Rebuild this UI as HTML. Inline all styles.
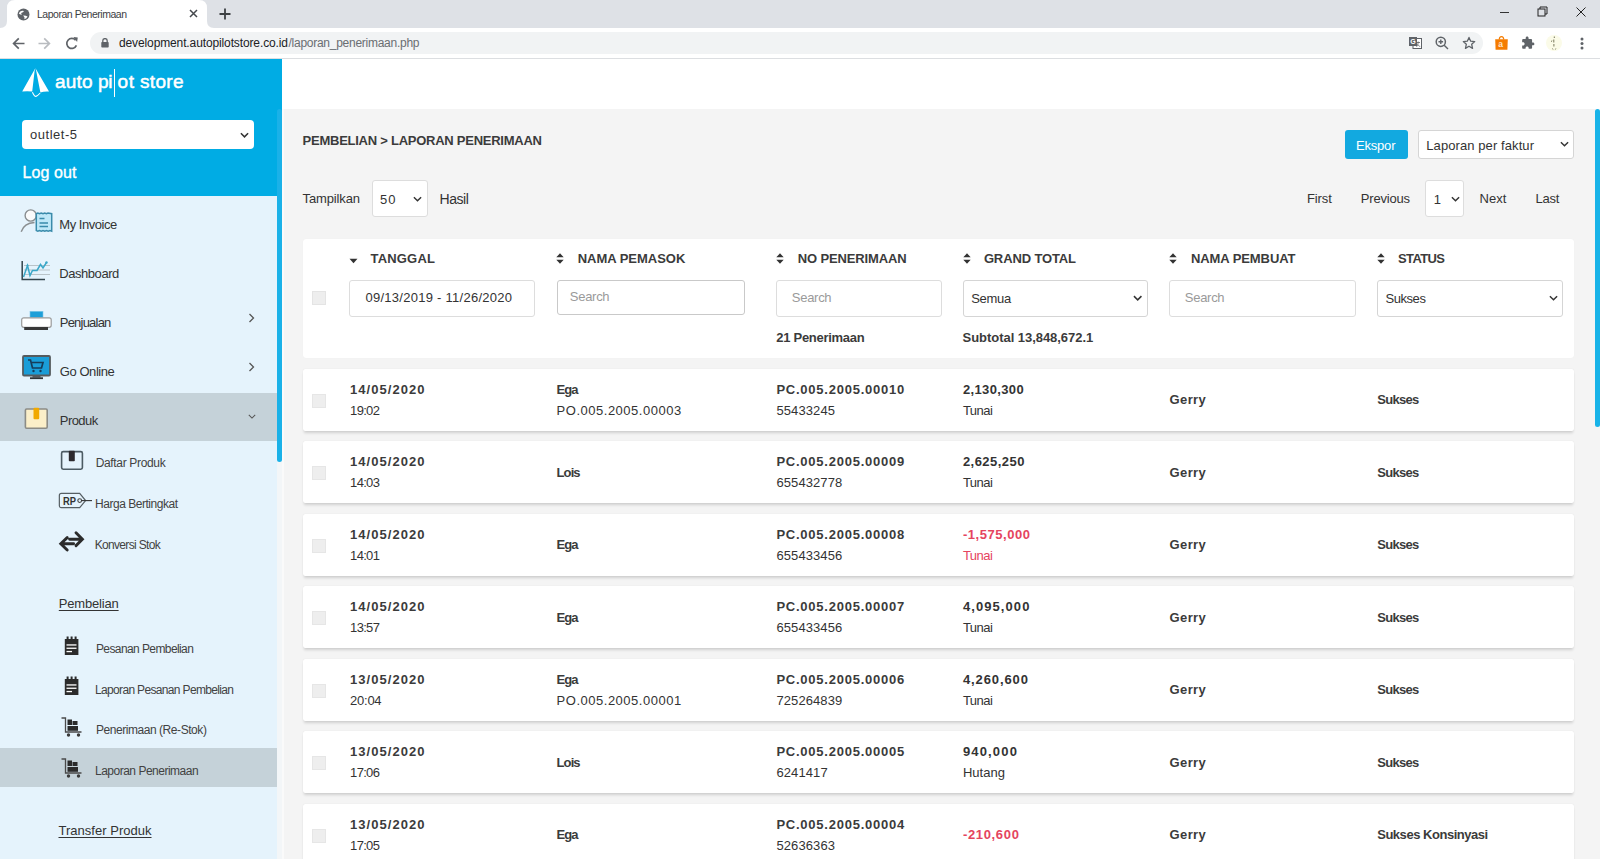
<!DOCTYPE html>
<html><head><meta charset="utf-8">
<style>
*{box-sizing:border-box;margin:0;padding:0}
html,body{width:1600px;height:859px;overflow:hidden;background:#f4f4f4;font-family:"Liberation Sans",sans-serif;color:#333;position:relative}
.a{position:absolute}
.t{position:absolute;white-space:pre;line-height:1}
.card{position:absolute;left:302.5px;width:1271.5px;background:#fff;border-radius:2px;box-shadow:0 3px 3px -1px rgba(0,0,0,.15),0 0 1px rgba(0,0,0,.12)}
</style></head><body>
<div class='a' style='left:0;top:0;width:1600px;height:28px;background:#dee1e6'></div>
<svg class='a' style='left:0;top:0' width='220' height='28'><path d='M0 28 Q7 28 7 21 L7 8 Q7 0 15 0 L199 0 Q207 0 207 8 L207 21 Q207 28 214 28 Z' fill='#fff'/></svg>
<svg class='a' style='left:17px;top:8px' width='13' height='13' viewBox='0 0 13 13'><circle cx='6.5' cy='6.5' r='6' fill='#5f6368'/><path d='M3.2 3.5 Q5 2.2 7 3 Q6.2 4.6 4.6 4.8 Q3.6 5.4 4.8 6.6 Q2.8 6.8 1.9 5.6 Q2.3 4.3 3.2 3.5Z M6.2 7.6 Q8.6 7.4 10.6 8.6 Q9.6 10.8 7.4 11.3 Q8.2 9.6 6.2 7.6Z' fill='#fff'/></svg>
<svg class='a' style='left:189px;top:9px' width='9' height='9'><path d='M1 1 L8 8 M8 1 L1 8' stroke='#45494d' stroke-width='1.5'/></svg>
<svg class='a' style='left:219px;top:8px' width='12' height='12'><path d='M6 0.5 V11.5 M0.5 6 H11.5' stroke='#3c4043' stroke-width='1.8'/></svg>
<div class='a' style='left:1500px;top:11.5px;width:9px;height:1px;background:#333'></div>
<svg class='a' style='left:1537px;top:6px' width='11' height='11'><rect x='1' y='3' width='7' height='7' fill='none' stroke='#222' stroke-width='1'/><path d='M3 3 V1 H10 V8 H8' fill='none' stroke='#222' stroke-width='1'/></svg>
<svg class='a' style='left:1576px;top:7px' width='10' height='10'><path d='M0.5 0.5 L9.5 9.5 M9.5 0.5 L0.5 9.5' stroke='#222' stroke-width='1'/></svg>
<div class='a' style='left:0;top:28px;width:1600px;height:31px;background:#fff;border-bottom:1px solid #dcdee1'></div>
<svg class='a' style='left:12px;top:37px' width='13' height='13' viewBox='0 0 13 13'><path d='M12.5 6.5 H1.8 M6.8 1.3 L1.6 6.5 L6.8 11.7' fill='none' stroke='#5f6368' stroke-width='1.7'/></svg>
<svg class='a' style='left:38px;top:37px' width='13' height='13' viewBox='0 0 13 13'><path d='M0.5 6.5 H11.2 M6.2 1.3 L11.4 6.5 L6.2 11.7' fill='none' stroke='#b9bcc0' stroke-width='1.7'/></svg>
<svg class='a' style='left:65px;top:37px' width='14' height='13' viewBox='0 0 14 13'><path d='M10.6 3.2 A5 5 0 1 0 11.4 8.4' fill='none' stroke='#5f6368' stroke-width='1.7'/><path d='M8 0.5 L12.4 0.5 L12.4 4.9 Z' fill='#5f6368' transform='rotate(8 12 3)'/></svg>
<div class='a' style='left:90px;top:32px;width:1393px;height:22px;background:#f1f3f4;border-radius:11px'></div>
<svg class='a' style='left:101px;top:38px' width='8' height='10' viewBox='0 0 8 10'><path d='M1.8 4 V2.8 A2.2 2.2 0 0 1 6.2 2.8 V4' fill='none' stroke='#5f6368' stroke-width='1.3'/><rect x='0.3' y='4' width='7.4' height='5.6' rx='0.8' fill='#5f6368'/></svg>
<svg class='a' style='left:1409px;top:37px' width='13' height='12' viewBox='0 0 13 12'><rect x='4' y='1.5' width='8.5' height='10' fill='#fff' stroke='#5f6368' stroke-width='1'/><rect x='0' y='0' width='8' height='9' fill='#5f6368'/><text x='1.3' y='7.2' font-size='7' font-family='Liberation Sans' font-weight='700' fill='#fff'>G</text><path d='M7.5 5.5 L11 5.5 M9.2 4.5 V5.5 Q9 8.5 7.5 9.8 M8.8 7.5 L11 9.8' stroke='#5f6368' stroke-width='0.8' fill='none'/></svg>
<svg class='a' style='left:1435px;top:36px' width='14' height='14' viewBox='0 0 14 14'><circle cx='5.8' cy='5.8' r='4.6' fill='none' stroke='#5f6368' stroke-width='1.5'/><path d='M9.2 9.2 L13 13 M5.8 3.5 V8.1 M3.5 5.8 H8.1' stroke='#5f6368' stroke-width='1.4'/></svg>
<svg class='a' style='left:1462px;top:36px' width='14' height='14' viewBox='0 0 24 24'><path d='M12 2.5 L14.9 8.9 L21.8 9.6 L16.6 14.3 L18.1 21.2 L12 17.6 L5.9 21.2 L7.4 14.3 L2.2 9.6 L9.1 8.9 Z' fill='none' stroke='#5f6368' stroke-width='2.2' stroke-linejoin='round'/></svg>
<svg class='a' style='left:1494px;top:35px' width='15' height='16' viewBox='0 0 15 16'><path d='M5.3 4.5 Q5.3 1.6 7.5 1.6 Q9.7 1.6 9.7 4.5' fill='none' stroke='#f57c00' stroke-width='1.2'/><path d='M1.2 4.2 H13.8 L13.4 14.8 H1.6 Z' fill='#f57c00'/><text x='4.2' y='12.3' font-size='8.5' font-family='Liberation Sans' font-weight='700' fill='#fde3c8'>a</text></svg>
<svg class='a' style='left:1521px;top:36px' width='14' height='14' viewBox='0 0 24 24'><path d='M20.5 11H19V7c0-1.1-.9-2-2-2h-4V3.5C13 2.1 11.9 1 10.5 1S8 2.1 8 3.5V5H4c-1.1 0-2 .9-2 2v3.8h1.5c1.5 0 2.7 1.2 2.7 2.7S5 16.2 3.5 16.2H2V20c0 1.1.9 2 2 2h3.8v-1.5c0-1.5 1.2-2.7 2.7-2.7s2.7 1.2 2.7 2.7V22H17c1.1 0 2-.9 2-2v-4h1.5c1.4 0 2.5-1.1 2.5-2.5S21.9 11 20.5 11z' fill='#5f6368'/></svg>
<svg class='a' style='left:1545px;top:34px' width='18' height='18' viewBox='0 0 18 18'><circle cx='9' cy='9' r='8' fill='#fbfbe8'/><path d='M9.3 2.5 V4 M8.8 5.5 V8.5 M6 7.5 L7.2 6.8 M8.9 10 V12.5 M7.5 14.5 L8 15.5 M10.8 14.5 L10.4 15.5' stroke='#77775a' stroke-width='1'/></svg>
<svg class='a' style='left:1580px;top:37px' width='4' height='13'><circle cx='2' cy='2' r='1.5' fill='#5f6368'/><circle cx='2' cy='6.5' r='1.5' fill='#5f6368'/><circle cx='2' cy='11' r='1.5' fill='#5f6368'/></svg>
<div class='a' style='left:0;top:59px;width:282px;height:137px;background:#00ace4'></div>
<svg class='a' style='left:22px;top:68px' width='28' height='30' viewBox='0 0 28 30'>
<path d='M13.3 0.3 L0.2 23.6 Q5 23 10.2 23.6 L12.6 3 Z' fill='#fff'/>
<path d='M13.5 0.3 L27 23.6 Q22 23.2 18.4 24.6 L14.2 3 Z' fill='#fff'/>
<path d='M10.4 24.2 Q12.5 28.5 13.9 28.4 Q15.5 28 18.2 25' fill='none' stroke='#fff' stroke-width='1.1'/></svg>
<div class='a' style='left:113.8px;top:69px;width:1.7px;height:28px;background:#fff'></div>
<div class='a' style='left:22px;top:120px;width:232px;height:29px;background:#fff;border-radius:4px'></div>
<svg class='a' style='left:239.5px;top:131.5px' width='9' height='6' viewBox='0 0 10 6'><path d='M1 1 L5 5 L9 1' fill='none' stroke='#333' stroke-width='1.7'/></svg>
<div class='a' style='left:0;top:196px;width:277px;height:663px;background:#e5f3fc'></div>
<div class='a' style='left:277px;top:196px;width:5px;height:663px;background:#f3f6f8'></div>
<div class='a' style='left:277px;top:109px;width:5px;height:353px;background:#1ab1e8;border-radius:3px'></div><div class='a' style='left:282px;top:109px;width:2px;height:750px;background:#fafafa'></div>
<div class='a' style='left:0;top:393px;width:277px;height:48px;background:#c5d2d9'></div>
<div class='a' style='left:0;top:748px;width:277px;height:39px;background:#c5d2d9'></div>
<svg class='a' style='left:20px;top:208px' width='33' height='25' viewBox='0 0 33 25'>
<path d='M1.2 23.8 Q4 15 14.5 14.5' fill='none' stroke='#8a8e90' stroke-width='1.4'/>
<circle cx='10.7' cy='7.5' r='5.6' fill='#fafafa' stroke='#8a8e90' stroke-width='1.4'/>
<path d='M16.3 5.7 L17.8 5 L19.5 5.7 L21.2 5 L23 5.7 L24.7 5 L26.4 5.7 L28 5 L31.7 5.7 L31.7 23.2 L30 22.6 L28.2 23.2 L26.5 22.6 L24.8 23.2 L23 22.6 L21.3 23.2 L19.5 22.6 L17.8 23.2 L16.3 22.6 Z' fill='#bfe8f8' stroke='#3a8bab' stroke-width='1.5'/>
<path d='M19.5 10.5 H24.5 M19.5 15 H28 M19.5 18.5 H28' stroke='#3a8bab' stroke-width='1.6'/></svg>
<svg class='a' style='left:20px;top:260px' width='32' height='22' viewBox='0 0 32 22'>
<path d='M4 5.5 H30 M4 10 H30 M4 14.5 H30' stroke='#b9c3c8' stroke-width='1'/>
<path d='M2.2 1 V19.5 H25' fill='none' stroke='#34444c' stroke-width='1.5'/>
<path d='M3.5 17 L7.5 5.5 L10 15.5 L12.5 10.5 L17 10.5 L20.5 4.5 L23 8 L26.5 2.5' fill='none' stroke='#3aa7c8' stroke-width='1.5'/>
<circle cx='7.5' cy='5.5' r='1.1' fill='#3aa7c8'/><circle cx='26.5' cy='2.5' r='1.2' fill='#3aa7c8'/></svg>
<svg class='a' style='left:21px;top:310px' width='31' height='21' viewBox='0 0 31 21'>
<rect x='9' y='1.3' width='13' height='6.5' fill='#1e9fd8' stroke='#7fc6e6' stroke-width='0.6'/>
<rect x='0.7' y='7.8' width='29.5' height='9.5' rx='2' fill='#fff' stroke='#9a9a9a' stroke-width='1.2'/>
<rect x='3.2' y='17' width='23.8' height='3' fill='#383838'/></svg>
<svg class='a' style='left:248px;top:313px' width='7' height='10' viewBox='0 0 7 10'><path d='M1.5 1 L5.5 5 L1.5 9' fill='none' stroke='#555' stroke-width='1.3'/></svg>
<svg class='a' style='left:22px;top:355px' width='29' height='25' viewBox='0 0 29 25'>
<rect x='1' y='1' width='27' height='19.5' rx='1' fill='#1a9dd8' stroke='#555b5e' stroke-width='1.8'/>
<path d='M6 5 H8.5 L10.5 13 H19.5 L21 7.5 H9.5' fill='none' stroke='#163c5a' stroke-width='1.7'/>
<circle cx='11.5' cy='16' r='1.2' fill='#163c5a'/><circle cx='18.5' cy='16' r='1.2' fill='#163c5a'/>
<rect x='10.5' y='20.5' width='8' height='2' fill='#555b5e'/><rect x='8' y='22.3' width='13' height='1.8' fill='#2e3336'/></svg>
<svg class='a' style='left:248px;top:362px' width='7' height='10' viewBox='0 0 7 10'><path d='M1.5 1 L5.5 5 L1.5 9' fill='none' stroke='#555' stroke-width='1.3'/></svg>
<svg class='a' style='left:24px;top:407px' width='25' height='23' viewBox='0 0 25 23'>
<rect x='1.4' y='2' width='21.8' height='19.2' rx='1.2' fill='#fbefc9' stroke='#8c8c86' stroke-width='1.6'/>
<rect x='9.5' y='0.8' width='5.7' height='11.4' rx='1' fill='#f1a900'/></svg>
<svg class='a' style='left:247.5px;top:413.5px' width='8' height='5' viewBox='0 0 10 6'><path d='M1 1 L5 5 L9 1' fill='none' stroke='#555' stroke-width='1.3'/></svg>
<svg class='a' style='left:60px;top:450px' width='24' height='21' viewBox='0 0 24 21'>
<rect x='1.6' y='1.6' width='20.8' height='17.6' rx='1.6' fill='none' stroke='#4c5b63' stroke-width='1.6'/>
<rect x='8.8' y='0.8' width='6' height='10.4' rx='0.8' fill='#2d2a2e'/></svg>
<svg class='a' style='left:58px;top:492px' width='35' height='17' viewBox='0 0 35 17'>
<path d='M3.4 1.4 H21.7 L27.6 8.6 L21.7 15.6 H3.4 Q1.35 15.6 1.35 13.6 V3.4 Q1.35 1.4 3.4 1.4 Z' fill='none' stroke='#555e63' stroke-width='1.2'/>
<text x='4.9' y='12.5' font-size='10.6' font-family='Liberation Sans' font-weight='700' fill='#333' textLength='13' lengthAdjust='spacingAndGlyphs'>RP</text>
<circle cx='21.7' cy='8.6' r='1.9' fill='none' stroke='#444' stroke-width='1.1'/><path d='M23.5 8.6 H34' stroke='#333' stroke-width='1.1'/></svg>
<svg class='a' style='left:58px;top:530px' width='28' height='23' viewBox='0 0 28 23'>
<path d='M9.2 7.6 L2.8 13.8 L9.2 20 M3.5 13.8 H15.6 M18 2.7 L24.4 9.2 L18 15.6 M11.6 9.2 H23.6' fill='none' stroke='#2b2b2b' stroke-width='2.9' stroke-linecap='round' stroke-linejoin='miter'/></svg>
<svg class='a' style='left:64px;top:636px' width='15' height='20' viewBox='0 0 15 20'>
<rect x='0.8' y='3' width='13.6' height='16' fill='#2b2b2b'/>
<rect x='2.6' y='0.5' width='2' height='4' fill='#2b2b2b'/><rect x='6.6' y='0.5' width='2' height='4' fill='#2b2b2b'/><rect x='10.6' y='0.5' width='2' height='4' fill='#2b2b2b'/>
<rect x='2.5' y='8.3' width='10' height='1.3' fill='#fff'/><rect x='2.5' y='11.6' width='10' height='1.3' fill='#fff'/><rect x='2.5' y='14.9' width='5.5' height='1.3' fill='#fff'/></svg>
<svg class='a' style='left:64px;top:676px' width='15' height='20' viewBox='0 0 15 20'>
<rect x='0.8' y='3' width='13.6' height='16' fill='#2b2b2b'/>
<rect x='2.6' y='0.5' width='2' height='4' fill='#2b2b2b'/><rect x='6.6' y='0.5' width='2' height='4' fill='#2b2b2b'/><rect x='10.6' y='0.5' width='2' height='4' fill='#2b2b2b'/>
<rect x='2.5' y='8.3' width='10' height='1.3' fill='#fff'/><rect x='2.5' y='11.6' width='10' height='1.3' fill='#fff'/><rect x='2.5' y='14.9' width='5.5' height='1.3' fill='#fff'/></svg>
<svg class='a' style='left:61px;top:717px' width='22' height='21' viewBox='0 0 22 21'>
<path d='M0.5 1 H4.5 V15 H20.5' fill='none' stroke='#4a4a4a' stroke-width='1.3'/>
<rect x='6.5' y='2.5' width='4.5' height='5.5' fill='#2b2b2b'/><rect x='11.5' y='4' width='5' height='4' fill='#2b2b2b'/>
<rect x='6.5' y='9' width='10.5' height='4.8' fill='#2b2b2b'/>
<circle cx='7.5' cy='18' r='1.7' fill='#3a3a3a'/><circle cx='17.5' cy='18' r='1.7' fill='#3a3a3a'/></svg>
<svg class='a' style='left:61px;top:758px' width='22' height='21' viewBox='0 0 22 21'>
<path d='M0.5 1 H4.5 V15 H20.5' fill='none' stroke='#4a4a4a' stroke-width='1.3'/>
<rect x='6.5' y='2.5' width='4.5' height='5.5' fill='#2b2b2b'/><rect x='11.5' y='4' width='5' height='4' fill='#2b2b2b'/>
<rect x='6.5' y='9' width='10.5' height='4.8' fill='#2b2b2b'/>
<circle cx='7.5' cy='18' r='1.7' fill='#3a3a3a'/><circle cx='17.5' cy='18' r='1.7' fill='#3a3a3a'/></svg>
<div class='a' style='left:282px;top:59px;width:1318px;height:50px;background:#fff'></div>
<div class='a' style='left:1595px;top:109px;width:5px;height:318px;background:#18b3e8;border-radius:3px'></div>
<div class='a' style='left:1345px;top:130px;width:62.5px;height:29px;background:#12a9e0;border-radius:3px'></div>
<div class='a' style='left:1418px;top:130px;width:156px;height:29px;background:#fff;border:1px solid #d5d5d5;border-radius:3px'></div>
<svg class='a' style='left:1560px;top:141px' width='9' height='6' viewBox='0 0 10 6'><path d='M1 1 L5 5 L9 1' fill='none' stroke='#333' stroke-width='1.6'/></svg>
<div class='a' style='left:372px;top:180px;width:55.5px;height:37px;background:#fff;border:1px solid #ddd;border-radius:3px'></div>
<svg class='a' style='left:412.5px;top:195.5px' width='9' height='6' viewBox='0 0 10 6'><path d='M1 1 L5 5 L9 1' fill='none' stroke='#333' stroke-width='1.6'/></svg>
<div class='a' style='left:1425px;top:180px;width:39px;height:37px;background:#fff;border:1px solid #ddd;border-radius:3px'></div>
<svg class='a' style='left:1450.5px;top:195.5px' width='9' height='6' viewBox='0 0 10 6'><path d='M1 1 L5 5 L9 1' fill='none' stroke='#333' stroke-width='1.6'/></svg>
<div class='a' style='left:302.5px;top:239px;width:1271.5px;height:119px;background:#fff;border-radius:3px;box-shadow:0 0 1px rgba(0,0,0,.06)'></div>
<div class='a' style='left:312px;top:291px;width:14px;height:14px;background:#eee;border:1px solid #e4e4e4'></div>
<svg class='a' style='left:349px;top:258px' width='9' height='6' viewBox='0 0 9 6'><path d='M0.5 0.8 H8.5 L4.5 5.2 Z' fill='#333'/></svg>
<svg class='a' style='left:556px;top:253px' width='8' height='11' viewBox='0 0 8 11'><path d='M4 0.3 L7.7 4.3 H0.3 Z M0.3 6.7 H7.7 L4 10.7 Z' fill='#333'/></svg>
<svg class='a' style='left:776px;top:253px' width='8' height='11' viewBox='0 0 8 11'><path d='M4 0.3 L7.7 4.3 H0.3 Z M0.3 6.7 H7.7 L4 10.7 Z' fill='#333'/></svg>
<svg class='a' style='left:962.6px;top:253px' width='8' height='11' viewBox='0 0 8 11'><path d='M4 0.3 L7.7 4.3 H0.3 Z M0.3 6.7 H7.7 L4 10.7 Z' fill='#333'/></svg>
<svg class='a' style='left:1169.4px;top:253px' width='8' height='11' viewBox='0 0 8 11'><path d='M4 0.3 L7.7 4.3 H0.3 Z M0.3 6.7 H7.7 L4 10.7 Z' fill='#333'/></svg>
<svg class='a' style='left:1376.7px;top:253px' width='8' height='11' viewBox='0 0 8 11'><path d='M4 0.3 L7.7 4.3 H0.3 Z M0.3 6.7 H7.7 L4 10.7 Z' fill='#333'/></svg>
<div class='a' style='left:349.4px;top:279.5px;width:185.20000000000005px;height:37px;background:#fff;border:1px solid #ddd;border-radius:3px'></div>
<div class='a' style='left:556.7px;top:279.5px;width:188.0px;height:35px;background:#fff;border:1px solid #c9c9c9;border-radius:3px'></div>
<div class='a' style='left:776.3px;top:279.5px;width:165.4000000000001px;height:37px;background:#fff;border:1px solid #ddd;border-radius:3px'></div>
<div class='a' style='left:962.6px;top:279.5px;width:184.9999999999999px;height:37px;background:#fff;border:1px solid #d5d5d5;border-radius:3px'></div>
<svg class='a' style='left:1133.4px;top:295px' width='9.4' height='6' viewBox='0 0 10 6'><path d='M1 1 L5 5 L9 1' fill='none' stroke='#333' stroke-width='1.6'/></svg>
<div class='a' style='left:1169.4px;top:279.5px;width:186.19999999999982px;height:37px;background:#fff;border:1px solid #ddd;border-radius:3px'></div>
<div class='a' style='left:1376.7px;top:279.5px;width:186.29999999999995px;height:37px;background:#fff;border:1px solid #d5d5d5;border-radius:3px'></div>
<svg class='a' style='left:1549.3px;top:295px' width='9' height='6' viewBox='0 0 10 6'><path d='M1 1 L5 5 L9 1' fill='none' stroke='#333' stroke-width='1.6'/></svg>
<div class='card' style='top:369px;height:62px'></div>
<div class='a' style='left:312px;top:394px;width:14px;height:14px;background:#eee;border:1px solid #e6e6e6'></div>
<div class='card' style='top:441px;height:62px'></div>
<div class='a' style='left:312px;top:466px;width:14px;height:14px;background:#eee;border:1px solid #e6e6e6'></div>
<div class='card' style='top:514px;height:62px'></div>
<div class='a' style='left:312px;top:539px;width:14px;height:14px;background:#eee;border:1px solid #e6e6e6'></div>
<div class='card' style='top:586px;height:62px'></div>
<div class='a' style='left:312px;top:611px;width:14px;height:14px;background:#eee;border:1px solid #e6e6e6'></div>
<div class='card' style='top:659px;height:62px'></div>
<div class='a' style='left:312px;top:684px;width:14px;height:14px;background:#eee;border:1px solid #e6e6e6'></div>
<div class='card' style='top:731px;height:62px'></div>
<div class='a' style='left:312px;top:756px;width:14px;height:14px;background:#eee;border:1px solid #e6e6e6'></div>
<div class='card' style='top:804px;height:62px'></div>
<div class='a' style='left:312px;top:829px;width:14px;height:14px;background:#eee;border:1px solid #e6e6e6'></div>
<div class='t' style='left:37px;top:9.11px;font-size:10.5px;font-weight:400;color:#3c4043;letter-spacing:-0.475px;'>Laporan Penerimaan</div>
<div class='t' style='left:119px;top:37.44px;font-size:12px;font-weight:400;color:#202124;letter-spacing:-0.122px;'>development.autopilotstore.co.id</div>
<div class='t' style='left:288.5px;top:37.44px;font-size:12px;font-weight:400;color:#6a6e72;letter-spacing:-0.263px;'>/laporan_penerimaan.php</div>
<div class='t' style='left:55px;top:71.51px;font-size:19px;font-weight:400;color:#fff;letter-spacing:0.205px;-webkit-text-stroke:0.5px #fff;'>auto</div>
<div class='t' style='left:98px;top:71.51px;font-size:19px;font-weight:400;color:#fff;-webkit-text-stroke:0.5px #fff;'>p</div>
<div class='t' style='left:108.3px;top:71.51px;font-size:19px;font-weight:400;color:#fff;-webkit-text-stroke:0.5px #fff;'>i</div>
<div class='t' style='left:117.6px;top:71.51px;font-size:19px;font-weight:400;color:#fff;letter-spacing:0.541px;-webkit-text-stroke:0.5px #fff;'>ot</div>
<div class='t' style='left:140px;top:71.51px;font-size:19px;font-weight:400;color:#fff;letter-spacing:0.312px;-webkit-text-stroke:0.5px #fff;'>store</div>
<div class='t' style='left:30px;top:128.39px;font-size:13px;font-weight:400;color:#333;letter-spacing:0.518px;'>outlet-5</div>
<div class='t' style='left:22.5px;top:165.25px;font-size:16px;font-weight:400;color:#fff;letter-spacing:0.102px;-webkit-text-stroke:0.35px #fff;'>Log out</div>
<div class='t' style='left:59.3px;top:217.79px;font-size:13px;font-weight:400;color:#333;letter-spacing:-0.460px;'>My Invoice</div>
<div class='t' style='left:59.3px;top:266.59px;font-size:13px;font-weight:400;color:#333;letter-spacing:-0.451px;'>Dashboard</div>
<div class='t' style='left:59.8px;top:315.79px;font-size:13px;font-weight:400;color:#333;letter-spacing:-0.791px;'>Penjualan</div>
<div class='t' style='left:59.8px;top:364.69px;font-size:13px;font-weight:400;color:#333;letter-spacing:-0.443px;'>Go Online</div>
<div class='t' style='left:59.8px;top:413.99px;font-size:13px;font-weight:400;color:#333;letter-spacing:-0.561px;'>Produk</div>
<div class='t' style='left:95.7px;top:457.44px;font-size:12px;font-weight:400;color:#424242;letter-spacing:-0.337px;'>Daftar Produk</div>
<div class='t' style='left:95px;top:497.74px;font-size:12px;font-weight:400;color:#424242;letter-spacing:-0.470px;'>Harga Bertingkat</div>
<div class='t' style='left:94.7px;top:539.04px;font-size:12px;font-weight:400;color:#424242;letter-spacing:-0.671px;'>Konversi Stok</div>
<div class='t' style='left:58.8px;top:597.09px;font-size:13px;font-weight:400;color:#333;letter-spacing:-0.180px;text-decoration:underline;text-underline-offset:2px;'>Pembelian</div>
<div class='t' style='left:95.9px;top:642.84px;font-size:12px;font-weight:400;color:#424242;letter-spacing:-0.589px;'>Pesanan Pembelian</div>
<div class='t' style='left:95px;top:683.54px;font-size:12px;font-weight:400;color:#424242;letter-spacing:-0.658px;'>Laporan Pesanan Pembelian</div>
<div class='t' style='left:95.9px;top:724.34px;font-size:12px;font-weight:400;color:#424242;letter-spacing:-0.442px;'>Penerimaan (Re-Stok)</div>
<div class='t' style='left:95px;top:764.74px;font-size:12px;font-weight:400;color:#424242;letter-spacing:-0.499px;'>Laporan Penerimaan</div>
<div class='t' style='left:58.5px;top:824.39px;font-size:13px;font-weight:400;color:#333;letter-spacing:0.019px;text-decoration:underline;text-underline-offset:2px;'>Transfer Produk</div>
<div class='t' style='left:302.6px;top:133.79px;font-size:13px;font-weight:700;color:#3b3b3b;letter-spacing:-0.251px;'>PEMBELIAN &gt; LAPORAN PENERIMAAN</div>
<div class='t' style='left:1356px;top:138.99px;font-size:13px;font-weight:400;color:#fff;letter-spacing:-0.194px;'>Ekspor</div>
<div class='t' style='left:1426.3px;top:138.99px;font-size:13px;font-weight:400;color:#333;letter-spacing:0.086px;'>Laporan per faktur</div>
<div class='t' style='left:302.6px;top:192.29px;font-size:13px;font-weight:400;color:#333;letter-spacing:-0.141px;'>Tampilkan</div>
<div class='t' style='left:380px;top:192.99px;font-size:13px;font-weight:400;color:#333;letter-spacing:1.031px;'>50</div>
<div class='t' style='left:439.6px;top:191.55px;font-size:14px;font-weight:400;color:#333;letter-spacing:-0.456px;'>Hasil</div>
<div class='t' style='left:1307px;top:191.99px;font-size:13px;font-weight:400;color:#333;letter-spacing:-0.120px;'>First</div>
<div class='t' style='left:1360.8px;top:191.99px;font-size:13px;font-weight:400;color:#333;letter-spacing:-0.197px;'>Previous</div>
<div class='t' style='left:1433.8px;top:192.99px;font-size:13px;font-weight:400;color:#333;'>1</div>
<div class='t' style='left:1479.5px;top:191.99px;font-size:13px;font-weight:400;color:#333;letter-spacing:0.022px;'>Next</div>
<div class='t' style='left:1535.5px;top:191.99px;font-size:13px;font-weight:400;color:#333;letter-spacing:-0.259px;'>Last</div>
<div class='t' style='left:370.5px;top:252.29px;font-size:13px;font-weight:700;color:#3b3b3b;letter-spacing:0.181px;'>TANGGAL</div>
<div class='t' style='left:577.7px;top:252.29px;font-size:13px;font-weight:700;color:#3b3b3b;letter-spacing:-0.024px;'>NAMA PEMASOK</div>
<div class='t' style='left:797.7px;top:252.29px;font-size:13px;font-weight:700;color:#3b3b3b;letter-spacing:-0.126px;'>NO PENERIMAAN</div>
<div class='t' style='left:983.9px;top:252.29px;font-size:13px;font-weight:700;color:#3b3b3b;letter-spacing:-0.131px;'>GRAND TOTAL</div>
<div class='t' style='left:1191px;top:252.29px;font-size:13px;font-weight:700;color:#3b3b3b;letter-spacing:-0.085px;'>NAMA PEMBUAT</div>
<div class='t' style='left:1398px;top:252.29px;font-size:13px;font-weight:700;color:#3b3b3b;letter-spacing:-0.616px;'>STATUS</div>
<div class='t' style='left:365.4px;top:291.49px;font-size:13px;font-weight:400;color:#333;letter-spacing:0.267px;'>09/13/2019 - 11/26/2020</div>
<div class='t' style='left:569.8px;top:290.39px;font-size:13px;font-weight:400;color:#9a9a9a;letter-spacing:-0.281px;'>Search</div>
<div class='t' style='left:791.8px;top:291.49px;font-size:13px;font-weight:400;color:#9a9a9a;letter-spacing:-0.281px;'>Search</div>
<div class='t' style='left:971.2px;top:292.49px;font-size:13px;font-weight:400;color:#333;letter-spacing:-0.301px;'>Semua</div>
<div class='t' style='left:1184.8px;top:291.49px;font-size:13px;font-weight:400;color:#9a9a9a;letter-spacing:-0.281px;'>Search</div>
<div class='t' style='left:1385.4px;top:292.49px;font-size:13px;font-weight:400;color:#333;letter-spacing:-0.428px;'>Sukses</div>
<div class='t' style='left:776.3px;top:331.39px;font-size:13px;font-weight:700;color:#3b3b3b;letter-spacing:-0.282px;'>21 Penerimaan</div>
<div class='t' style='left:962.6px;top:331.39px;font-size:13px;font-weight:700;color:#3b3b3b;letter-spacing:-0.046px;'>Subtotal 13,848,672.1</div>
<div class='t' style='left:350.1px;top:382.99px;font-size:13px;font-weight:700;color:#3b3b3b;letter-spacing:1.025px;'>14/05/2020</div>
<div class='t' style='left:350.1px;top:403.99px;font-size:13px;font-weight:400;color:#333;letter-spacing:-0.687px;'>19:02</div>
<div class='t' style='left:556.6px;top:382.99px;font-size:13px;font-weight:700;color:#3b3b3b;letter-spacing:-0.922px;'>Ega</div>
<div class='t' style='left:556.6px;top:403.99px;font-size:13px;font-weight:400;color:#333;letter-spacing:0.513px;'>PO.005.2005.00003</div>
<div class='t' style='left:776.4px;top:382.99px;font-size:13px;font-weight:700;color:#3b3b3b;letter-spacing:0.759px;'>PC.005.2005.00010</div>
<div class='t' style='left:776.4px;top:403.99px;font-size:13px;font-weight:400;color:#333;letter-spacing:0.102px;'>55433245</div>
<div class='t' style='left:962.9px;top:382.99px;font-size:13px;font-weight:700;color:#333;letter-spacing:0.370px;'>2,130,300</div>
<div class='t' style='left:962.9px;top:403.99px;font-size:13px;font-weight:400;color:#333;letter-spacing:-0.512px;'>Tunai</div>
<div class='t' style='left:1169.6px;top:393.39px;font-size:13px;font-weight:700;color:#3b3b3b;letter-spacing:0.349px;'>Gerry</div>
<div class='t' style='left:1377.2px;top:393.39px;font-size:13px;font-weight:700;color:#3b3b3b;letter-spacing:-0.709px;'>Sukses</div>
<div class='t' style='left:350.1px;top:455.49px;font-size:13px;font-weight:700;color:#3b3b3b;letter-spacing:1.025px;'>14/05/2020</div>
<div class='t' style='left:350.1px;top:476.49px;font-size:13px;font-weight:400;color:#333;letter-spacing:-0.687px;'>14:03</div>
<div class='t' style='left:556.6px;top:465.89px;font-size:13px;font-weight:700;color:#3b3b3b;letter-spacing:-0.911px;'>Lois</div>
<div class='t' style='left:776.4px;top:455.49px;font-size:13px;font-weight:700;color:#3b3b3b;letter-spacing:0.759px;'>PC.005.2005.00009</div>
<div class='t' style='left:776.4px;top:476.49px;font-size:13px;font-weight:400;color:#333;letter-spacing:0.100px;'>655432778</div>
<div class='t' style='left:962.9px;top:455.49px;font-size:13px;font-weight:700;color:#333;letter-spacing:0.457px;'>2,625,250</div>
<div class='t' style='left:962.9px;top:476.49px;font-size:13px;font-weight:400;color:#333;letter-spacing:-0.512px;'>Tunai</div>
<div class='t' style='left:1169.6px;top:465.89px;font-size:13px;font-weight:700;color:#3b3b3b;letter-spacing:0.349px;'>Gerry</div>
<div class='t' style='left:1377.2px;top:465.89px;font-size:13px;font-weight:700;color:#3b3b3b;letter-spacing:-0.709px;'>Sukses</div>
<div class='t' style='left:350.1px;top:527.99px;font-size:13px;font-weight:700;color:#3b3b3b;letter-spacing:1.025px;'>14/05/2020</div>
<div class='t' style='left:350.1px;top:548.99px;font-size:13px;font-weight:400;color:#333;letter-spacing:-0.687px;'>14:01</div>
<div class='t' style='left:556.6px;top:538.39px;font-size:13px;font-weight:700;color:#3b3b3b;letter-spacing:-0.922px;'>Ega</div>
<div class='t' style='left:776.4px;top:527.99px;font-size:13px;font-weight:700;color:#3b3b3b;letter-spacing:0.759px;'>PC.005.2005.00008</div>
<div class='t' style='left:776.4px;top:548.99px;font-size:13px;font-weight:400;color:#333;letter-spacing:0.100px;'>655433456</div>
<div class='t' style='left:962.9px;top:527.99px;font-size:13px;font-weight:700;color:#e5445e;letter-spacing:0.559px;'>-1,575,000</div>
<div class='t' style='left:962.9px;top:548.99px;font-size:13px;font-weight:400;color:#e5445e;letter-spacing:-0.512px;'>Tunai</div>
<div class='t' style='left:1169.6px;top:538.39px;font-size:13px;font-weight:700;color:#3b3b3b;letter-spacing:0.349px;'>Gerry</div>
<div class='t' style='left:1377.2px;top:538.39px;font-size:13px;font-weight:700;color:#3b3b3b;letter-spacing:-0.709px;'>Sukses</div>
<div class='t' style='left:350.1px;top:600.49px;font-size:13px;font-weight:700;color:#3b3b3b;letter-spacing:1.025px;'>14/05/2020</div>
<div class='t' style='left:350.1px;top:621.49px;font-size:13px;font-weight:400;color:#333;letter-spacing:-0.687px;'>13:57</div>
<div class='t' style='left:556.6px;top:610.89px;font-size:13px;font-weight:700;color:#3b3b3b;letter-spacing:-0.922px;'>Ega</div>
<div class='t' style='left:776.4px;top:600.49px;font-size:13px;font-weight:700;color:#3b3b3b;letter-spacing:0.759px;'>PC.005.2005.00007</div>
<div class='t' style='left:776.4px;top:621.49px;font-size:13px;font-weight:400;color:#333;letter-spacing:0.100px;'>655433456</div>
<div class='t' style='left:962.9px;top:600.49px;font-size:13px;font-weight:700;color:#333;letter-spacing:1.082px;'>4,095,000</div>
<div class='t' style='left:962.9px;top:621.49px;font-size:13px;font-weight:400;color:#333;letter-spacing:-0.512px;'>Tunai</div>
<div class='t' style='left:1169.6px;top:610.89px;font-size:13px;font-weight:700;color:#3b3b3b;letter-spacing:0.349px;'>Gerry</div>
<div class='t' style='left:1377.2px;top:610.89px;font-size:13px;font-weight:700;color:#3b3b3b;letter-spacing:-0.709px;'>Sukses</div>
<div class='t' style='left:350.1px;top:672.99px;font-size:13px;font-weight:700;color:#3b3b3b;letter-spacing:1.025px;'>13/05/2020</div>
<div class='t' style='left:350.1px;top:693.99px;font-size:13px;font-weight:400;color:#333;letter-spacing:-0.262px;'>20:04</div>
<div class='t' style='left:556.6px;top:672.99px;font-size:13px;font-weight:700;color:#3b3b3b;letter-spacing:-0.922px;'>Ega</div>
<div class='t' style='left:556.6px;top:693.99px;font-size:13px;font-weight:400;color:#333;letter-spacing:0.513px;'>PO.005.2005.00001</div>
<div class='t' style='left:776.4px;top:672.99px;font-size:13px;font-weight:700;color:#3b3b3b;letter-spacing:0.759px;'>PC.005.2005.00006</div>
<div class='t' style='left:776.4px;top:693.99px;font-size:13px;font-weight:400;color:#333;letter-spacing:0.100px;'>725264839</div>
<div class='t' style='left:962.9px;top:672.99px;font-size:13px;font-weight:700;color:#333;letter-spacing:0.895px;'>4,260,600</div>
<div class='t' style='left:962.9px;top:693.99px;font-size:13px;font-weight:400;color:#333;letter-spacing:-0.512px;'>Tunai</div>
<div class='t' style='left:1169.6px;top:683.39px;font-size:13px;font-weight:700;color:#3b3b3b;letter-spacing:0.349px;'>Gerry</div>
<div class='t' style='left:1377.2px;top:683.39px;font-size:13px;font-weight:700;color:#3b3b3b;letter-spacing:-0.709px;'>Sukses</div>
<div class='t' style='left:350.1px;top:745.49px;font-size:13px;font-weight:700;color:#3b3b3b;letter-spacing:1.025px;'>13/05/2020</div>
<div class='t' style='left:350.1px;top:766.49px;font-size:13px;font-weight:400;color:#333;letter-spacing:-0.687px;'>17:06</div>
<div class='t' style='left:556.6px;top:755.89px;font-size:13px;font-weight:700;color:#3b3b3b;letter-spacing:-0.911px;'>Lois</div>
<div class='t' style='left:776.4px;top:745.49px;font-size:13px;font-weight:700;color:#3b3b3b;letter-spacing:0.759px;'>PC.005.2005.00005</div>
<div class='t' style='left:776.4px;top:766.49px;font-size:13px;font-weight:400;color:#333;letter-spacing:0.103px;'>6241417</div>
<div class='t' style='left:962.9px;top:745.49px;font-size:13px;font-weight:700;color:#333;letter-spacing:1.167px;'>940,000</div>
<div class='t' style='left:962.9px;top:766.49px;font-size:13px;font-weight:400;color:#333;letter-spacing:0.016px;'>Hutang</div>
<div class='t' style='left:1169.6px;top:755.89px;font-size:13px;font-weight:700;color:#3b3b3b;letter-spacing:0.349px;'>Gerry</div>
<div class='t' style='left:1377.2px;top:755.89px;font-size:13px;font-weight:700;color:#3b3b3b;letter-spacing:-0.709px;'>Sukses</div>
<div class='t' style='left:350.1px;top:817.99px;font-size:13px;font-weight:700;color:#3b3b3b;letter-spacing:1.025px;'>13/05/2020</div>
<div class='t' style='left:350.1px;top:838.99px;font-size:13px;font-weight:400;color:#333;letter-spacing:-0.687px;'>17:05</div>
<div class='t' style='left:556.6px;top:828.39px;font-size:13px;font-weight:700;color:#3b3b3b;letter-spacing:-0.922px;'>Ega</div>
<div class='t' style='left:776.4px;top:817.99px;font-size:13px;font-weight:700;color:#3b3b3b;letter-spacing:0.759px;'>PC.005.2005.00004</div>
<div class='t' style='left:776.4px;top:838.99px;font-size:13px;font-weight:400;color:#333;letter-spacing:0.102px;'>52636363</div>
<div class='t' style='left:962.9px;top:828.39px;font-size:13px;font-weight:700;color:#e5445e;letter-spacing:0.667px;'>-210,600</div>
<div class='t' style='left:1169.6px;top:828.39px;font-size:13px;font-weight:700;color:#3b3b3b;letter-spacing:0.349px;'>Gerry</div>
<div class='t' style='left:1377.2px;top:828.39px;font-size:13px;font-weight:700;color:#3b3b3b;letter-spacing:-0.469px;'>Sukses Konsinyasi</div>
</body></html>
